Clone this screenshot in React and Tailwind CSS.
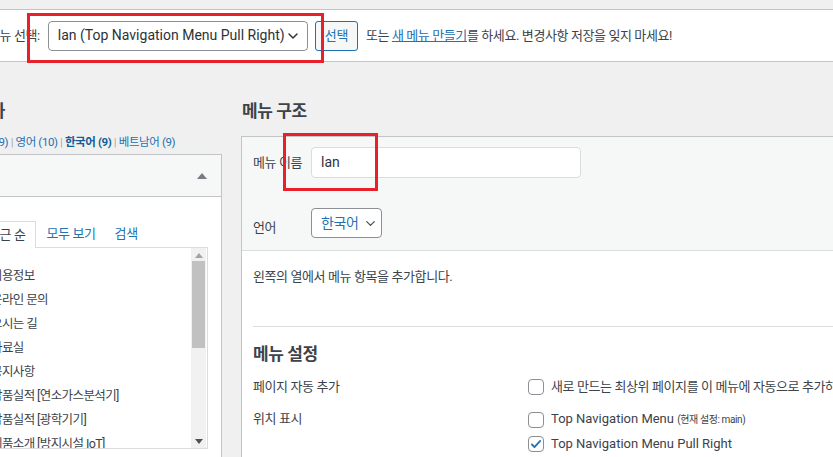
import { ChevronDown } from "lucide-react";

const font = "font-['Roboto','Noto_Sans_CJK_KR',sans-serif]";

function Checkbox({ checked }) {
  return (
    <span className="w-4 h-4 shrink-0 rounded-[4px] border border-[#8c8f94] bg-white flex items-center justify-center">
      {checked && (
        <svg width="14" height="14" viewBox="0 0 20 20">
          <path d="M4 10.5l3.8 3.8L16 5.5" fill="none" stroke="#2271b1" strokeWidth="2.6" strokeLinecap="round" strokeLinejoin="round" />
        </svg>
      )}
    </span>
  );
}

export default function App() {
  const items = [
    "이용정보",
    "온라인 문의",
    "오시는 길",
    "자료실",
    "공지사항",
    "납품실적 [연소가스분석기]",
    "납품실적 [광학기기]",
    "제품소개 [방지시설 IoT]",
  ];

  return (
    <div className={`${font} relative w-[833px] h-[457px] overflow-hidden bg-[#f0f0f1] text-[#3c434a] tracking-[-0.4px]`}>
      {/* top bar: menu picker */}
      <div className="mt-[9px] h-[53px] bg-white border-y border-[#c3c4c7] flex items-center whitespace-nowrap text-[13px]">
        <span className="-ml-[12px] mr-[8px]">메뉴 선택:</span>
        <div className="w-[260px] h-[30px] border border-[#8c8f94] rounded-[4px] flex items-center justify-between pl-[9px] pr-[6px] text-[14px] text-[#2c3338] tracking-normal">
          <span>lan (Top Navigation Menu Pull Right)</span>
          <ChevronDown size={16} strokeWidth={2.2} />
        </div>
        <button className="ml-[7px] h-[30px] px-[9px] rounded-[3px] border border-[#2271b1] bg-[#f6f7f7] text-[#2271b1]">
          선택
        </button>
        <span className="ml-[8px]">
          또는{" "}
          <span className="text-[#2271b1] underline">새 메뉴 만들기</span>를 하세요. 변경사항 저장을 잊지 마세요!
        </span>
      </div>

      <div className="flex mt-[37px]">
        {/* left column: add menu items */}
        <div className="w-[241px] shrink-0">
          <h2 className="-ml-[94px] text-[17px] font-semibold leading-[24px] whitespace-nowrap">메뉴 항목 추가</h2>
          <div className="mt-[10px] -ml-[38px] text-[11.5px] leading-[18px] text-[#2271b1] whitespace-nowrap">
            중국어 (9) <span className="text-[#a7aaad]">|</span> 영어 (10){" "}
            <span className="text-[#a7aaad]">|</span> <b className="text-[#135e96]">한국어 (9)</b>{" "}
            <span className="text-[#a7aaad]">|</span> 베트남어 (9)
          </div>
          <div className="mt-[3px] -ml-[2px] w-[224px] h-[320px] border border-[#c3c4c7] bg-white">
            <div className="h-[42px] bg-[#f6f7f7] border-b border-[#c3c4c7] flex items-center justify-end pr-[14px]">
              <svg width="10" height="6" viewBox="0 0 10 6">
                <path d="M0 6 L5 0 L10 6 Z" fill="#787c82" />
              </svg>
            </div>
            <div className="pt-[24px] pr-[13px]">
              <div className="flex items-end text-[13px] whitespace-nowrap">
                <div className="-ml-[21px] h-[27px] px-[9px] border border-b-0 border-[#dcdcde] bg-white flex items-center relative -mb-px">
                  최근 순
                </div>
                <span className="ml-[11px] mb-[4px] text-[#2271b1]">모두 보기</span>
                <span className="ml-[19px] mb-[4px] text-[#2271b1]">검색</span>
              </div>
              <div className="h-[202px] border border-[#dcdcde] flex">
                <div className="flex-1 overflow-hidden pt-[16px] text-[12.5px] tracking-[-0.6px] leading-[24px] whitespace-nowrap">
                  {items.map((it) => (
                    <div key={it} className="-ml-[9px]">{it}</div>
                  ))}
                </div>
                <div className="w-[15px] bg-[#f1f1f1] flex flex-col items-center pt-[5px] pb-[4px] mr-px">
                  <svg width="8" height="5" viewBox="0 0 8 5"><path d="M0 5 L4 0 L8 5 Z" fill="#a3a3a3" /></svg>
                  <div className="w-[13px] h-[87px] mt-[3px] bg-[#c1c1c1]" />
                  <div className="flex-1" />
                  <svg width="8" height="5" viewBox="0 0 8 5"><path d="M0 0 L4 5 L8 0 Z" fill="#505050" /></svg>
                </div>
              </div>
            </div>
          </div>
        </div>

        {/* right column: menu structure */}
        <div className="flex-1 min-w-0">
          <h2 className="ml-px text-[17px] font-semibold leading-[24px] whitespace-nowrap">메뉴 구조</h2>
          <div className="mt-[13px] w-[700px] border border-[#c3c4c7] bg-white">
            <div className="bg-[#f6f7f7] border-b border-[#dcdcde] pl-[11px] pt-[10px] pb-[12px] text-[13px]">
              <div className="flex items-center">
                <span className="w-[58px]">메뉴 이름</span>
                <div className="w-[270px] h-[31px] border border-[#dcdcde] rounded-[4px] bg-white flex items-center pl-[9px] text-[14px] text-[#2c3338] tracking-normal">
                  lan
                </div>
              </div>
              <div className="flex items-center mt-[30px]">
                <span className="w-[58px] mt-[10px]">언어</span>
                <div className="w-[71px] h-[30px] border border-[#8c8f94] rounded-[4px] bg-white flex items-center pl-[9px] gap-[5px] text-[14px] text-[#2271b1]">
                  한국어
                  <ChevronDown size={15} strokeWidth={2.2} className="text-[#50575e]" />
                </div>
              </div>
            </div>
            <div className="px-[11px] text-[13px]">
              <p className="pt-[15px] h-[75px] leading-[22px]">왼쪽의 열에서 메뉴 항목을 추가합니다.</p>
              <div className="border-t border-[#dcdcde]" />
              <h3 className="mt-[15px] text-[17px] font-semibold leading-[24px]">메뉴 설정</h3>
              <div className="flex mt-[9px] leading-[24px] whitespace-nowrap">
                <div className="w-[275px] shrink-0">
                  <div>페이지 자동 추가</div>
                  <div className="mt-[8px]">위치 표시</div>
                </div>
                <div>
                  <div className="flex items-center gap-[7px]">
                    <Checkbox />
                    <span>새로 만드는 최상위 페이지를 이 메뉴에 자동으로 추가하기</span>
                  </div>
                  <div className="flex items-center gap-[7px] mt-[8px]">
                    <Checkbox />
                    <span className="tracking-normal">
                      Top Navigation Menu <span className="text-[10px] tracking-[-0.4px]">(현재 설정: main)</span>
                    </span>
                  </div>
                  <div className="flex items-center gap-[7px]">
                    <Checkbox checked />
                    <span className="tracking-normal">Top Navigation Menu Pull Right</span>
                  </div>
                  <div className="flex items-center gap-[7px]">
                    <Checkbox />
                    <span className="tracking-normal">Footer Menu</span>
                  </div>
                </div>
              </div>
            </div>
          </div>
        </div>
      </div>

      {/* red annotation boxes */}
      <div className="absolute left-[27px] top-[13px] w-[297px] h-[50px] border-[3px] border-[#e8202a]" />
      <div className="absolute left-[283px] top-[133px] w-[95px] h-[58px] border-[3px] border-[#e8202a]" />
    </div>
  );
}
